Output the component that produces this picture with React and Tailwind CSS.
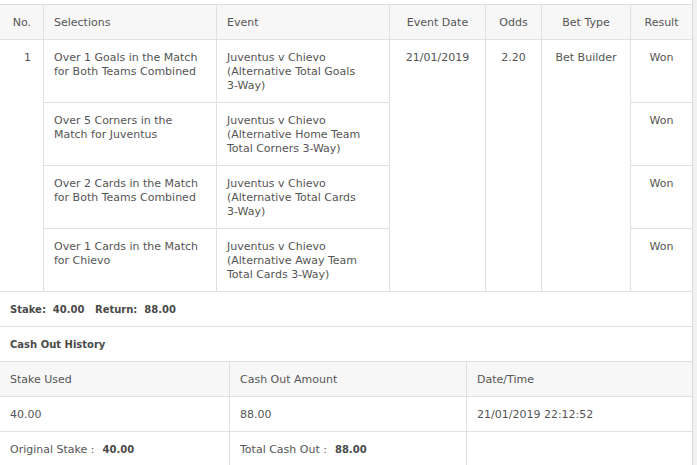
const selections = [
  {
    sel: ['Over 1 Goals in the Match', 'for Both Teams Combined'],
    event: ['Juventus v Chievo', '(Alternative Total Goals', '3-Way)'],
  },
  {
    sel: ['Over 5 Corners in the', 'Match for Juventus'],
    event: ['Juventus v Chievo', '(Alternative Home Team', 'Total Corners 3-Way)'],
  },
  {
    sel: ['Over 2 Cards in the Match', 'for Both Teams Combined'],
    event: ['Juventus v Chievo', '(Alternative Total Cards', '3-Way)'],
  },
  {
    sel: ['Over 1 Cards in the Match', 'for Chievo'],
    event: ['Juventus v Chievo', '(Alternative Away Team', 'Total Cards 3-Way)'],
  },
];

const head = 'bg-[#f7f7f7] border-b border-[#e0e0e0] pt-[11px] pb-[9px] h-[35px]';
const cell = 'border-b border-[#e0e0e0] pt-[11px] pb-[9px] h-[63px]';
const span4 = 'row-span-4 border-r border-b border-[#e0e0e0] pt-[11px]';
const row = 'h-[35px] border-b border-[#e0e0e0] px-[10px] pt-[11px] pb-[9px]';
const strong = 'font-bold text-[10px] text-[#4a4a4a]';

function Lines({ lines }) {
  return lines.map((l, i) => <div key={i}>{l}</div>);
}

export default function App() {
  return (
    <div
      className="flex h-[465px] w-[697px] overflow-hidden bg-white text-[11px] leading-[14px] text-[#555]"
      style={{ fontFamily: '"DejaVu Sans", Verdana, sans-serif' }}
    >
      <div className="w-[692px] shrink-0 pt-[4px]">
        {/* ── Selections table ─────────────────────────────────────────── */}
        <div className="grid grid-cols-[44px_173px_173px_96px_56px_89px_61px] border-t border-[#e0e0e0]">
          <div className={`${head} border-r pr-[12px] text-right`}>No.</div>
          <div className={`${head} border-r px-[10px]`}>Selections</div>
          <div className={`${head} border-r px-[10px]`}>Event</div>
          <div className={`${head} border-r text-center`}>Event Date</div>
          <div className={`${head} border-r text-center`}>Odds</div>
          <div className={`${head} border-r text-center`}>Bet Type</div>
          <div className={`${head} text-center`}>Result</div>

          {selections.map((s, i) => (
            <div key={i} className="contents">
              {i === 0 && <div className={`${span4} pr-[12px] text-right`}>1</div>}
              <div className={`${cell} border-r px-[10px]`}>
                <Lines lines={s.sel} />
              </div>
              <div className={`${cell} border-r px-[10px]`}>
                <Lines lines={s.event} />
              </div>
              {i === 0 && (
                <>
                  <div className={`${span4} text-center`}>21/01/2019</div>
                  <div className={`${span4} text-center`}>2.20</div>
                  <div className={`${span4} text-center`}>Bet Builder</div>
                </>
              )}
              <div className={`${cell} text-center`}>Won</div>
            </div>
          ))}
        </div>

        {/* ── Summary ──────────────────────────────────────────────────── */}
        <div className={`${row} ${strong}`}>
          Stake:&nbsp; 40.00 &nbsp; Return:&nbsp; 88.00
        </div>
        <div className={`${row} ${strong}`}>Cash Out History</div>

        {/* ── Cash out table ───────────────────────────────────────────── */}
        <div className="grid grid-cols-[230px_237px_225px]">
          <div className={`${head} border-r px-[10px]`}>Stake Used</div>
          <div className={`${head} border-r px-[10px]`}>Cash Out Amount</div>
          <div className={`${head} px-[10px]`}>Date/Time</div>

          <div className={`${row} border-r`}>40.00</div>
          <div className={`${row} border-r`}>88.00</div>
          <div className={row}>21/01/2019 22:12:52</div>

          <div className={`${row} border-r`}>
            Original Stake :<span className={`${strong} ml-[8px]`}>40.00</span>
          </div>
          <div className={`${row} border-r`}>
            Total Cash Out :<span className={`${strong} ml-[8px]`}>88.00</span>
          </div>
          <div className={row} />
        </div>
      </div>

      {/* scrollbar track */}
      <div className="flex-1 border-l border-[#d9d9d9] bg-[#f1f1f1]" />
    </div>
  );
}
